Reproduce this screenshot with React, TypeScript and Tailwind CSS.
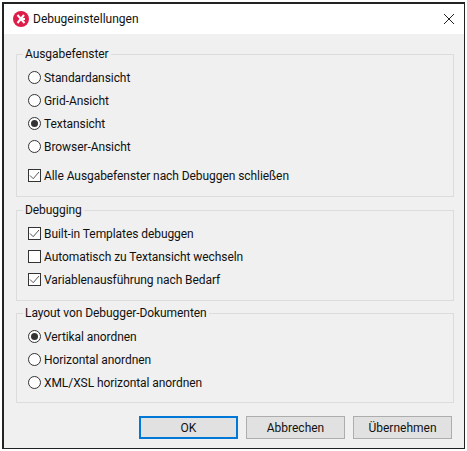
function Radio({ label, checked }: { label: string; checked?: boolean }) {
  return (
    <div className="flex h-[23px] items-center">
      <span className="flex h-[13px] w-[13px] shrink-0 items-center justify-center rounded-full border border-[#333] bg-white">
        {checked && <span className="h-[7px] w-[7px] rounded-full bg-[#333]" />}
      </span>
      <span className="ml-[3px]">{label}</span>
    </div>
  );
}

function Check({ label, checked, className }: { label: string; checked?: boolean; className?: string }) {
  return (
    <div className={`flex h-[23px] items-center ${className ?? ""}`}>
      <span className="flex h-[13px] w-[13px] shrink-0 items-center justify-center border border-[#333] bg-white">
        {checked && (
          <svg width="11" height="11" viewBox="0 0 11 11" fill="none">
            <path d="M1 5.5 L4.2 8.7 L10 2" stroke="#555" strokeWidth="1" />
          </svg>
        )}
      </span>
      <span className="ml-[3px]">{label}</span>
    </div>
  );
}

function Group({ title, children, className }: { title: string; children: React.ReactNode; className: string }) {
  return (
    <fieldset className={`border border-[#dcdcdc] pl-[11px] tracking-[-0.07px] ${className}`}>
      <legend className="ml-[-5px] px-[2px] leading-[14px]">{title}</legend>
      {children}
    </fieldset>
  );
}

function Button({ label, primary }: { label: string; primary?: boolean }) {
  return (
    <button
      className={
        primary
          ? "h-[23px] w-[99px] border-2 border-[#0078d7] bg-[#e1e1e1]"
          : "h-[23px] w-[99px] border border-[#adadad] bg-[#e1e1e1]"
      }
    >
      {label}
    </button>
  );
}

export default function App() {
  return (
    <div className="h-[451px] w-[467px] bg-white p-[2px] font-['Roboto',sans-serif] text-[12px] text-[#111]">
      <div className="flex h-[447px] w-[463px] flex-col border border-[#222] border-t-2 border-l-2 bg-[#f0f0f0]">
        <div className="flex h-[30px] shrink-0 items-center bg-white pl-[8px] pr-[9px]">
          <svg width="18" height="18" viewBox="0 0 18 18">
            <circle cx="9" cy="9" r="8" fill="#de1c48" />
            <path d="M5.5 5 L12.5 13 M12 5 L5.5 13 M10.5 9 L13 9" stroke="#fff" strokeWidth="2" fill="none" />
          </svg>
          <span className="ml-[3px] flex-1">Debugeinstellungen</span>
          <svg width="12" height="12" viewBox="0 0 12 12" fill="none">
            <path d="M1 1 L11 11 M11 1 L1 11" stroke="#222" strokeWidth="1" />
          </svg>
        </div>
        <div className="flex flex-1 flex-col pl-[12px] pr-[10px] pt-[13px]">
          <Group title="Ausgabefenster" className="h-[150px] pt-[5px]">
            <Radio label="Standardansicht" />
            <Radio label="Grid-Ansicht" />
            <Radio label="Textansicht" checked />
            <Radio label="Browser-Ansicht" />
            <Check label="Alle Ausgabefenster nach Debuggen schließen" checked className="mt-[6px]" />
          </Group>
          <Group title="Debugging" className="mt-[6px] h-[98px] pt-[5px]">
            <Check label="Built-in Templates debuggen" checked />
            <Check label="Automatisch zu Textansicht wechseln" />
            <Check label="Variablenausführung nach Bedarf" checked />
          </Group>
          <Group title="Layout von Debugger-Dokumenten" className="mt-[5px] h-[97px] pt-[5px]">
            <Radio label="Vertikal anordnen" checked />
            <Radio label="Horizontal anordnen" />
            <Radio label="XML/XSL horizontal anordnen" />
          </Group>
          <div className="mr-[2px] mt-[13px] flex justify-end gap-[8px]">
            <Button label="OK" primary />
            <Button label="Abbrechen" />
            <Button label="Übernehmen" />
          </div>
        </div>
      </div>
    </div>
  );
}
